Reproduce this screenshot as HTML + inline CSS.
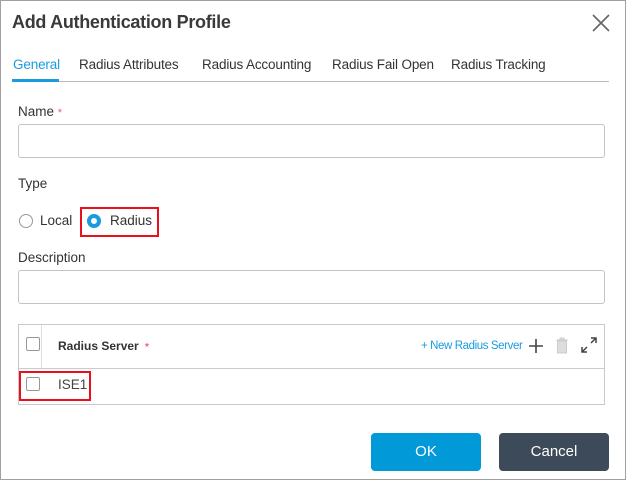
<!DOCTYPE html>
<html><head><style>
*{margin:0;padding:0;box-sizing:border-box}
body{width:626px;height:480px;overflow:hidden;background:#fff;font-family:"Liberation Sans",sans-serif;color:#333;position:relative}
.a{position:absolute;white-space:nowrap}
.frame{position:absolute;left:0;top:0;width:626px;height:480px;border:1px solid #a0a0a0}
.inp{position:absolute;left:18px;width:587px;height:34px;border:1px solid #c4c4c4;border-radius:3px}
.cb{position:absolute;width:14px;height:14px;border:1px solid #999;border-radius:2px;background:#fff}
.tab{position:absolute;top:57px;font-size:13.5px;color:#333;letter-spacing:-0.15px}
.lbl{font-size:13.5px;color:#333}
</style></head><body>
<div class="frame"></div>
<div class="a" style="left:12px;top:12px;font-size:18px;font-weight:bold;color:#3a3a3a;letter-spacing:-0.3px">Add Authentication Profile</div>
<svg class="a" style="left:592px;top:14px" width="18" height="18"><path d="M1 1L17 17M17 1L1 17" stroke="#666" stroke-width="1.6"/></svg>
<div class="tab" style="left:13px;color:#1a9be0">General</div>
<div class="tab" style="left:79px">Radius Attributes</div>
<div class="tab" style="left:202px">Radius Accounting</div>
<div class="tab" style="left:332px">Radius Fail Open</div>
<div class="tab" style="left:451px">Radius Tracking</div>
<div class="a" style="left:12px;top:81px;width:597px;height:1px;background:#bbb"></div>
<div class="a" style="left:12px;top:79px;width:47px;height:3px;background:#1a9be0"></div>
<div class="a lbl" style="left:18px;top:104px">Name <span style="color:#f06070;font-size:11px">*</span></div>
<div class="inp" style="top:124px"></div>
<div class="a lbl" style="left:18px;top:176px">Type</div>
<div class="a" style="left:19px;top:214px;width:14px;height:14px;border:1px solid #999;border-radius:50%"></div>
<div class="a lbl" style="left:40px;top:213px">Local</div>
<div class="a" style="left:80px;top:207px;width:79px;height:30px;border:2px solid #e8101a"></div>
<div class="a" style="left:87px;top:214px;width:14px;height:14px;border:4px solid #1a9be0;border-radius:50%"></div>
<div class="a lbl" style="left:110px;top:213px">Radius</div>
<div class="a lbl" style="left:18px;top:250px">Description</div>
<div class="inp" style="top:270px"></div>
<div class="a" style="left:18px;top:324px;width:587px;height:81px;border:1px solid #c8c8c8"></div>
<div class="a" style="left:41px;top:325px;width:1px;height:43px;background:#ddd"></div>
<div class="a" style="left:19px;top:368px;width:585px;height:1px;background:#ccc"></div>
<div class="cb" style="left:26px;top:337px"></div>
<div class="a" style="left:58px;top:339px;font-size:12px;font-weight:bold;color:#333">Radius Server <span style="color:#f06070;font-size:10px;margin-left:3px">*</span></div>
<div class="a" style="left:421px;top:340px;font-size:11.5px;color:#1a9be0;letter-spacing:-0.4px">+ New Radius Server</div>
<svg class="a" style="left:529px;top:339px" width="14" height="14"><path d="M7 0V14M0 7H14" stroke="#444" stroke-width="1.6"/></svg>
<svg class="a" style="left:555px;top:337px" width="14" height="17"><path d="M1 3H13M5 3V1H9V3M2.5 4H11.5V16H2.5Z" fill="#ddd" stroke="#ccc"/></svg>
<svg class="a" style="left:581px;top:337px" width="16" height="16"><path d="M10 1H15V6M15 1L10 6M1 10V15H6M1 15L6 10" fill="none" stroke="#444" stroke-width="1.5"/></svg>
<div class="a" style="left:19px;top:371px;width:72px;height:30px;border:2px solid #e8101a"></div>
<div class="cb" style="left:26px;top:377px"></div>
<div class="a" style="left:58px;top:377px;font-size:13.5px;color:#444">ISE1</div>
<div class="a" style="left:371px;top:433px;width:110px;height:38px;background:#0299d9;border-radius:4px;color:#fff;font-size:15px;text-align:center;line-height:38px">OK</div>
<div class="a" style="left:499px;top:433px;width:110px;height:38px;background:#3c4a5a;border-radius:4px;color:#fff;font-size:15px;text-align:center;line-height:38px">Cancel</div>
</body></html>
